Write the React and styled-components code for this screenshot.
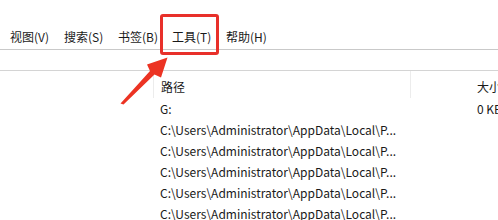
import React from "react";
import styled, { createGlobalStyle } from "styled-components";

const GlobalStyle = createGlobalStyle`
  html, body {
    margin: 0;
    padding: 0;
    background: #ffffff;
  }
  body {
    font-family: "Microsoft YaHei", "Noto Sans CJK SC", "Noto Sans", sans-serif;
    font-size: 12px;
    color: #1a1a1a;
  }
`;

const menuItems = ["视图(V)", "搜索(S)", "书签(B)", "工具(T)", "帮助(H)"];

const rows = [
  { path: "G:", size: "0 KB" },
  { path: "C:\\Users\\Administrator\\AppData\\Local\\P...", size: "" },
  { path: "C:\\Users\\Administrator\\AppData\\Local\\P...", size: "" },
  { path: "C:\\Users\\Administrator\\AppData\\Local\\P...", size: "" },
  { path: "C:\\Users\\Administrator\\AppData\\Local\\P...", size: "" },
  { path: "C:\\Users\\Administrator\\AppData\\Local\\P...", size: "" },
];

class App extends React.Component {
  render() {
    return (
      <Page>
        <GlobalStyle />
        <MenuBar>
          {menuItems.map((m) => (
            <MenuItem key={m}>{m}</MenuItem>
          ))}
        </MenuBar>
        <ToolBar />
        <Table>
          <HeaderRow>
            <Spacer />
            <HeaderCell>路径</HeaderCell>
            <HeaderCell $divider>大小</HeaderCell>
          </HeaderRow>
          {rows.map((r, i) => (
            <Row key={i}>
              <Spacer />
              <PathCell>{r.path}</PathCell>
              <SizeCell>{r.size}</SizeCell>
            </Row>
          ))}
        </Table>

        <Highlight />
        <Arrow viewBox="0 0 498 220" width="498" height="220">
          <polygon
            points="120.5,103.5 150,71 147,64.5 167.5,57.5 161,77.5 154.5,74.5 123.5,104.5"
            fill="#ec3323"
          />
        </Arrow>
      </Page>
    );
  }
}

const Page = styled.div`
  position: relative;
  width: 498px;
  height: 220px;
  overflow: hidden;
`;

const MenuBar = styled.div`
  height: 50px;
  box-sizing: border-box;
  display: flex;
  align-items: flex-end;
  padding: 0 0 4px 3px;
  border-bottom: 1px solid #c9c9c9;
`;

const MenuItem = styled.div`
  padding: 0 7px;
  width: 40px;
  line-height: 16px;
  white-space: nowrap;
  color: #1a1a1a;
`;

const ToolBar = styled.div`
  height: 20px;
  border-bottom: 1px solid #d4d4d4;
`;

const Table = styled.div`
  display: flex;
  flex-direction: column;
`;

const HeaderRow = styled.div`
  display: grid;
  grid-template-columns: 153px 257px 1fr;
  height: 27px;
`;

const Spacer = styled.div``;

const HeaderCell = styled.div`
  display: flex;
  align-items: center;
  padding-left: ${(p) => (p.$divider ? "66px" : "7px")};
  border-left: 1px solid #ececec;
  white-space: nowrap;
  padding-top: 4px;
`;

const Row = styled.div`
  display: grid;
  grid-template-columns: 153px 257px 1fr;
  height: 21px;
  align-items: center;
`;

const PathCell = styled.div`
  padding-left: 7px;
  white-space: nowrap;
  overflow: hidden;
`;

const SizeCell = styled.div`
  padding-left: 67px;
  white-space: nowrap;
`;

const Highlight = styled.div`
  position: absolute;
  left: 160px;
  top: 14px;
  width: 59px;
  height: 41px;
  box-sizing: border-box;
  border: 3px solid #e8302a;
  border-radius: 3px;
  pointer-events: none;
`;

const Arrow = styled.svg`
  position: absolute;
  left: 0;
  top: 0;
  pointer-events: none;
`;

export default App;
